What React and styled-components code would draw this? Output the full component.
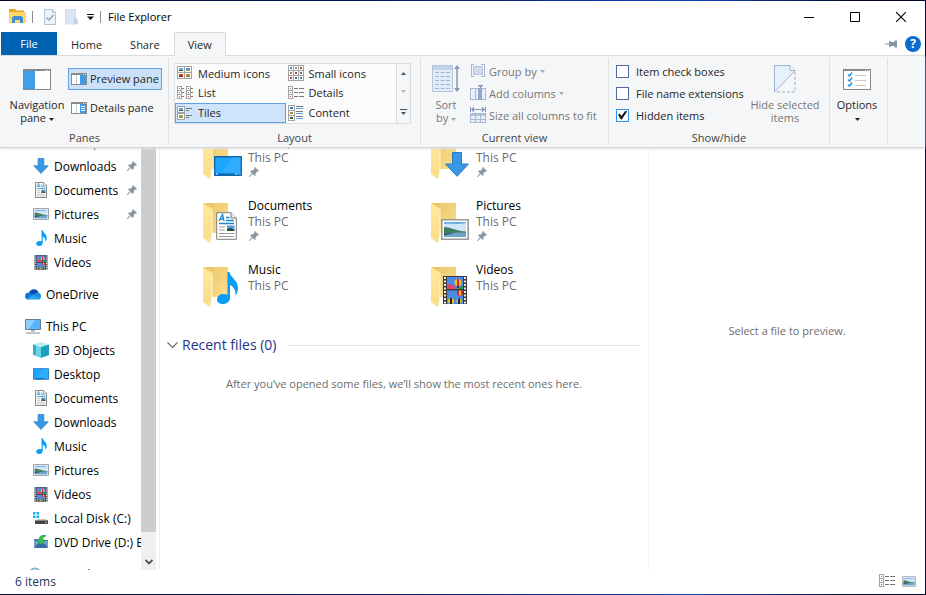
import React, { useState } from "react";
import styled, { createGlobalStyle } from "styled-components";

/* ---------- drawings ---------- */

const DocumentArt = (props) => (
  <svg viewBox="0 0 21 28" {...props}>
    <path d="M.7.7H15l5.3 5.3V27.3H.7Z" fill="#fff" stroke="#7d7d7d" vectorEffect="non-scaling-stroke" />
    <path d="M15 .7V6h5.3" fill="#eee" stroke="#7d7d7d" />
    <path d="M3 9 6.5 2.5 8 9M4 7h4" fill="none" stroke="#1e84d0" strokeWidth="1.3" />
    <path d="M10 5.5h3.500M10 8.500h8M3 11.500h15" stroke="#1e84d0" strokeWidth="1.3" />
    <path d="M3 15h6M3 18h6M3 21.500h15M3 24.500h15" stroke="#9a9a9a" />
    <path d="M11 13.500h7.500v5.500H11Z" fill="#5b9bd5" />
    <path d="M11 17l4-1 3.500 2v1H11Z" fill="#234b3c" />
  </svg>
);

const MusicArt = (props) => (
  <svg viewBox="0 0 21 32" {...props}>
    <path
      d="M10.500 0h2c.5 5 8.500 8 8.500 16 0 3-1 5.500-2.500 8 .5-5-1-8.500-5.500-11v12.500c0 4-3 6.500-7 6.500-3.500 0-6-1.700-6-4.500C0 24 3 22 6.500 22c1.500 0 3 .3 4 1Z"
      fill="#0a9bf5"
    />
  </svg>
);

const PictureArt = (props) => (
  <svg viewBox="0 0 28 21" {...props}>
    <path d="M.8.8h26.400v19.400H.8Z" fill="#fff" stroke="#999" strokeWidth="1.600" />
    <path d="M3 3h22v15H3Z" fill="#6aa8ea" />
    <path d="M3 5c7-1 13 1 22-1v9H3Z" fill="#cfe6fa" />
    <path d="M3 8c7 0 13 4.500 22 4.500V14H3Z" fill="#3f7d5c" />
    <path d="M3 13.500h22V18H3Z" fill="#6ea4c8" />
    <path d="M3 13.500h12L3 16.500Z" fill="#35625c" />
  </svg>
);

const FilmArt = (props) => (
  <svg viewBox="0 0 24 28" {...props}>
    <path d="M0 0h24v28H0Z" fill="#3a3a3a" />
    <path d="M4 1h16v12H4ZM4 14.500h16V28H4Z" fill="#4a8be4" />
    <path d="M4 9l4-1 4 2v3H4Z" fill="#d8486a" />
    <path d="M13 13l7-3v3Z" fill="#2c9a3f" />
    <circle cx="15" cy="6.500" r="3.500" fill="#f4c21f" />
    <path d="M14 3h2v7h-2Z" fill="#d8262c" />
    <path d="M14 10h2l-.5 2h-1Z" fill="#222" />
    <circle cx="17" cy="17" r="3" fill="#d8262c" />
    <path d="M16 14.500h2v5h-2Z" fill="#f4c21f" />
    <circle cx="8" cy="25" r="3" fill="#f4c21f" />
    <circle cx="16" cy="25" r="2.500" fill="#f4c21f" />
    <path d="M7 22h2v6H7ZM15 22.500h2V28h-2Z" fill="#222" />
    <path d="M2 1v27M22 1v27" stroke="#eee" strokeWidth="2" strokeDasharray="2 1.500" />
  </svg>
);

const ArrowArt = (props) => (
  <svg viewBox="0 0 24 25" {...props}>
    <path d="M7.500.5h9V12h7L12 24.300.5 12h7Z" fill="#3a97e4" stroke="#2a7cc4" />
  </svg>
);

const DesktopArt = (props) => (
  <svg viewBox="0 0 28 20" {...props}>
    <path d="M.7.7h26.600v18.600H.7Z" fill="#1ea5ff" stroke="#0c69b0" strokeWidth="1.400" />
    <path d="M18 1.400h8.500v15H8Z" fill="#43b5ff" opacity=".5" />
    <path d="M1.400 17.500h25.200v1.200H1.400Z" fill="#0c62a8" />
    <path d="M2 18h1.500M21 18h1.500M23.500 18h1M25.500 18h1" stroke="#fff" />
  </svg>
);

const CloudArt = (props) => (
  <svg viewBox="0 0 16 11" {...props}>
    <path d="M4 4C5 1 7 .3 9 .3c2.500 0 4 1.500 4.500 3.500L9 6Z" fill="#0a4fae" />
    <path d="M4 3.500C1.500 3.500 0 5 0 7.300 0 9 1 10.600 3.500 10.600L10 6Z" fill="#1374d6" />
    <path d="M13 3.800c2 .2 3 1.500 3 3.400 0 2-1.400 3.400-3.300 3.400L8 6.500c2-2 3-2.700 5-2.700Z" fill="#1490e0" />
    <path d="M2 10c2-1 4-4 7-4l6.500 3.200c-.6.900-1.600 1.400-3 1.400h-9C2.800 10.600 2.400 10.400 2 10Z" fill="#29a5f0" />
  </svg>
);

const ComputerArt = (props) => (
  <svg viewBox="0 0 16 15" {...props}>
    <path d="M.5.5h15v10H.5Z" fill="#55b6f8" stroke="#5f7f98" />
    <path d="M1 1h9L4 10H1Z" fill="#8fd0fb" />
    <path d="M6 11h4v1.500H6Z" fill="#9ab" />
    <path d="M1 14h14" stroke="#7b91a5" />
  </svg>
);

const CubeArt = (props) => (
  <svg viewBox="0 0 16 16" {...props}>
    <path d="M8 0l8 2.500L8 5 0 2.500Z" fill="#b9ecf2" />
    <path d="M0 2.500 8 5v11l-8-3Z" fill="#6ed3e0" />
    <path d="M16 2.500 8 5v11l8-3Z" fill="#1b9fc0" />
    <path d="M0 2.500 3 3.500v9l-3 .5Z" fill="#2aaec9" />
  </svg>
);

const DiskArt = (props) => (
  <svg viewBox="0 0 16 13" {...props}>
    <path d="M0 0h2.500v2.500H0ZM3.500 0H6v2.500H3.500ZM0 3.500h2.500V6H0ZM3.500 3.500H6V6H3.500Z" fill="#12b5ef" />
    <path d="M4 7h9l2 2H2Z" fill="#c5c5c5" />
    <path d="M2 8.500h13v3.500H2Z" fill="#444" />
    <path d="M12 10h2v1h-2Z" fill="#5fe05f" />
  </svg>
);

const DvdArt = (props) => (
  <svg viewBox="0 0 14 14" {...props}>
    <path d="M0 4h4l1 1h9v8H0Z" fill="#4d7fc0" />
    <path d="M0 6h14v7H0Z" fill="#6f9fd6" />
    <path d="M1 11c4-4 8-4 12 0v2H1Z" fill="#3b68a8" />
    <path d="M11 0c-4 0-6 2-6 5H3l4 5 4-5H8.500c0-2 .5-3 3.500-4Z" fill="#35c24a" stroke="#168a2c" strokeWidth=".6" />
  </svg>
);

const NetworkArt = (props) => (
  <svg viewBox="0 0 16 14" {...props}>
    <circle cx="10" cy="6" r="5.500" fill="#6fa8bf" />
    <path d="M7 3c2-2 4-2 6 0l-2 3Z" fill="#bcdbe8" />
    <path d="M2 7h11v6H2Z" fill="#3b97d3" />
  </svg>
);

const FolderArt = (props) => (
  <svg viewBox="0 0 40 44" {...props}>
    <defs>
      <linearGradient id="back" x1="0" y1="0" x2="1" y2="1">
        <stop offset="0" stopColor="#e9c466" />
        <stop offset="1" stopColor="#fbe08e" />
      </linearGradient>
      <linearGradient id="flap" x1="0" y1="0" x2="0" y2="1">
        <stop offset="0" stopColor="#ffe89f" />
        <stop offset="1" stopColor="#fbdd88" />
      </linearGradient>
    </defs>
    <path d="M0 1h25v29l-3 1H8Z" fill="url(#back)" />
    <path d="M0 1l9 6v24l-2 10-7-5Z" fill="url(#flap)" />
    <path d="M9 7v24l-1.500 10" fill="none" stroke="#fff4cc" />
  </svg>
);

const PinArt = (props) => (
  <svg viewBox="0 0 12 12" width="12" height="12" {...props}>
    <path
      d="M7 1l4 4-1 .8-.8-.2L7.500 7.500c.3 1.200 0 2-.6 2.600L4.700 8 1.500 11.200.8 10.700 4 7.300 1.900 5.200c.7-.7 1.600-.9 2.700-.6L6.500 2.800 6.200 2Z"
      fill="#8b969f"
    />
  </svg>
);

const WindowArt = ({ lines, ...props }) => (
  <svg viewBox="0 0 16 12" width="16" height="12" shapeRendering="crispEdges" {...props}>
    <path d="M0 0h16v12H0Z" fill="#8a8a8a" />
    <path d="M1 2h14v9H1Z" fill="#fff" />
    <path d="M12 1h1v1h-1ZM14 1h1v1h-1Z" fill="#ddd" />
    <path d="M5 2v9M9 2v9" stroke="#c4c8cc" />
    <path d="M9 2h6v9H9Z" fill="#3a9bea" />
    {lines && <path d="M10 4.500h4M10 6.500h4M10 8.500h4" stroke="#fff" />}
  </svg>
);

const NavigationArt = () => (
  <svg viewBox="0 0 28 21" width="28" height="21" shapeRendering="crispEdges">
    <path d="M0 0h28v21H0Z" fill="#858789" />
    <path d="M1 2h26v18H1Z" fill="#fff" />
    <path d="M1 2h11v18H1Z" fill="#3f9fe8" />
    <path d="M22 1h1v1h-1ZM24 1h1v1h-1ZM26 1h1v1h-1Z" fill="#eee" />
  </svg>
);

const Thumb = ({ x, y, top, bottom }) => (
  <>
    <path d={`M${x}.5 ${y}.5h7v6h-7Z`} fill="#fff" stroke="#a3a3a3" />
    <path d={`M${x + 2} ${y + 2}h4v2h-4Z`} fill={top} />
    <path d={`M${x + 2} ${y + 4}h4v1h-4Z`} fill={bottom} />
  </>
);

const MediumArt = () => (
  <svg viewBox="0 0 16 16" width="16" height="16" shapeRendering="crispEdges">
    <Thumb x={0} y={1} top="#6aa9e6" bottom="#2c6048" />
    <Thumb x={7} y={1} top="#4c8fdd" bottom="#a6b541" />
    <Thumb x={0} y={7} top="#d0402c" bottom="#8c1d15" />
    <Thumb x={7} y={7} top="#d98725" bottom="#5b8f39" />
  </svg>
);

const SmallArt = () => (
  <svg viewBox="0 0 16 16" width="16" height="16" shapeRendering="crispEdges">
    <path d="M0 0h16v16H0Z" fill="#a3a3a3" />
    {[0, 1, 2].map((row) =>
      [0, 1, 2].map((col) => (
        <g key={`${row}${col}`}>
          <path d={`M${1 + col * 5} ${1 + row * 5}h4v4h-4Z`} fill="#fff" />
          <path
            d={`M${2 + col * 5} ${2 + row * 5}h2v2h-2Z`}
            fill={["#4a86a8", "#a58a4a", "#b04a35", "#57748f"][(row + col) % 4]}
          />
        </g>
      ))
    )}
  </svg>
);

const dots = ["#4a9a6a", "#4a86c8", "#c8324a"];

const Strip = ({ x }) => (
  <>
    <path d={`M${x} 1h5v13h-5Z`} fill="#a3a3a3" />
    {dots.map((fill, i) => (
      <g key={fill}>
        <path d={`M${x + 1} ${2 + i * 4}h3v3h-3Z`} fill="#fff" />
        <path d={`M${x + 2} ${3 + i * 4}h1v1h-1Z`} fill={fill} />
      </g>
    ))}
  </>
);

const ListArt = () => (
  <svg viewBox="0 0 16 16" width="16" height="16" shapeRendering="crispEdges">
    <Strip x={0} />
    <Strip x={9} />
    <path d="M5 3.500h2M5 7.500h2M5 11.500h2M14 3.500h2M14 7.500h2M14 11.500h2" stroke="#777" />
  </svg>
);

const DetailsArt = () => (
  <svg viewBox="0 0 16 16" width="16" height="16" shapeRendering="crispEdges">
    <Strip x={0} />
    <path d="M6 3.500h4M11 3.500h5M6 7.500h4M11 7.500h5M6 11.500h4M11 11.500h5" stroke="#777" />
  </svg>
);

const TilesArt = () => (
  <svg viewBox="0 0 16 16" width="16" height="16" shapeRendering="crispEdges">
    <Thumb x={0} y={1} top="#6aa9e6" bottom="#2c6048" />
    <Thumb x={0} y={8} top="#8fae4a" bottom="#c7782e" />
    <path d="M9 3.500h6M9 5.500h3M9 10.500h6M9 12.500h3" stroke="#777" />
  </svg>
);

const ContentArt = () => (
  <svg viewBox="0 0 16 16" width="16" height="16" shapeRendering="crispEdges">
    <path d="M0 0h7v16H0Z" fill="#a3a3a3" />
    <path d="M1 1h5v4H1ZM1 6h5v4H1ZM1 11h5v4H1Z" fill="#fff" />
    <path d="M2 2h3v2H2Z" fill="#2f7f9a" />
    <path d="M2 7h3v2H2Z" fill="#a58a4a" />
    <path d="M2 12h3v2H2Z" fill="#2c6048" />
    <path d="M8 1.500h7M8 6.500h7M8 11.500h7" stroke="#777" />
    <path d="M8 3.500h7M8 8.500h7M8 13.500h7" stroke="#5aa5ee" />
  </svg>
);

const SortArt = () => (
  <svg viewBox="0 0 28 28" width="28" height="28">
    <path d="M.5.500h20v26H.5Z" fill="#e3ebf7" stroke="#b6c5de" />
    <path d="M1 1h19v4H1Z" fill="#c4d2e8" />
    <path d="M3 7.500h15M3 11.500h15M3 15.500h15M3 19.500h15M3 23.500h15" stroke="#a5b6d3" strokeDasharray="4 1.500" />
    <path d="M25 2v23" stroke="#8397bb" strokeWidth="1.500" />
    <path d="M22 4l3-4 3 4ZM22 23l3 4 3-4Z" fill="#8397bb" />
  </svg>
);

const GroupArt = () => (
  <svg viewBox="0 0 16 16" width="16" height="16" shapeRendering="crispEdges">
    <path d="M4 1.500H1.500v12H4M11 1.500h3.500v12H11" fill="none" stroke="#a9b6cc" />
    <path d="M3.500 3.500h9v8h-9Z" fill="#d0dcee" stroke="#b6c5de" />
  </svg>
);

const AddArt = () => (
  <svg viewBox="0 0 16 16" width="16" height="16" shapeRendering="crispEdges">
    <path d="M.5 3.500h15v11H.5Z" fill="#eaf0fa" stroke="#a9b9d5" />
    <path d="M5 3v12" stroke="#a9b9d5" />
    <path d="M8 3h4v12H8Z" fill="#93a7c9" />
    <path d="M8 0h5l-2.500 3Z" fill="#8397bb" />
  </svg>
);

const SizeArt = () => (
  <svg viewBox="0 0 16 16" width="16" height="16" shapeRendering="crispEdges">
    <path d="M.5 0v5M15.500 0v5M2 2.500h12M4 .5 2 2.500l2 2M12 .5l2 2-2 2" fill="none" stroke="#8397bb" />
    <path d="M.5 6.500h15v9H.5Z" fill="#eaf0fa" stroke="#a9b9d5" />
    <path d="M1 7h14v2H1Z" fill="#b6c5de" />
    <path d="M5.500 7v9M10.500 7v9M0 12.500h16" stroke="#a9b9d5" />
  </svg>
);

const HideArt = () => (
  <svg viewBox="0 0 22 28" width="22" height="28">
    <path d="M.5.500H16l5 5L.5 27Z" fill="#e8f0fb" stroke="#a0b2d4" />
    <path d="M16 .500v5h5" fill="#f6f9fd" stroke="#a0b2d4" />
    <path d="M21 7v20H2" fill="none" stroke="#a0aec6" strokeDasharray="3 2" />
  </svg>
);

const OptionsArt = () => (
  <svg viewBox="0 0 28 21" width="28" height="21">
    <g shapeRendering="crispEdges">
      <path d="M0 0h28v21H0Z" fill="#858789" />
      <path d="M1 2h26v18H1Z" fill="#fff" />
      <path d="M22 1h1v1h-1ZM24 1h1v1h-1ZM26 1h1v1h-1Z" fill="#eee" />
      <path d="M12 6.500h11M12 11.500h11M12 16.500h11" stroke="#c8c8c8" />
    </g>
    <path d="M5 6l1.500 1.500L9 4M5 11l1.500 1.500L9 9M5 16l1.500 1.500L9 14" fill="none" stroke="#2b94e3" strokeWidth="1.500" />
  </svg>
);

const Caret = ({ color = "#222" }) => (
  <svg viewBox="0 0 5 3" width="5" height="3">
    <path d="M0 0h5L2.500 3Z" fill={color} />
  </svg>
);

const art = {
  desktop: { Art: DesktopArt, w: 16, h: 12, box: [11, 18, 28, 20] },
  downloads: { Art: ArrowArt, w: 16, h: 16, box: [14, 14, 24, 25] },
  documents: { Art: DocumentArt, w: 12, h: 16, box: [13, 10, 21, 28] },
  pictures: { Art: PictureArt, w: 16, h: 12, box: [10, 17, 28, 21] },
  music: { Art: MusicArt, w: 11, h: 16, box: [14, 6, 21, 32] },
  videos: { Art: FilmArt, w: 14, h: 15, box: [12, 10, 24, 28] },
  onedrive: { Art: CloudArt, w: 16, h: 11 },
  computer: { Art: ComputerArt, w: 16, h: 15 },
  objects: { Art: CubeArt, w: 16, h: 16 },
  disk: { Art: DiskArt, w: 16, h: 13 },
  dvd: { Art: DvdArt, w: 14, h: 14 },
  network: { Art: NetworkArt, w: 16, h: 14 },
};

/* ---------- data ---------- */

const navGroups = [
  [
    { icon: "desktop", label: "Desktop", pinned: true },
    { icon: "downloads", label: "Downloads", pinned: true },
    { icon: "documents", label: "Documents", pinned: true },
    { icon: "pictures", label: "Pictures", pinned: true },
    { icon: "music", label: "Music" },
    { icon: "videos", label: "Videos" },
  ],
  [{ icon: "onedrive", label: "OneDrive", root: true }],
  [
    { icon: "computer", label: "This PC", root: true },
    { icon: "objects", label: "3D Objects" },
    { icon: "desktop", label: "Desktop" },
    { icon: "documents", label: "Documents" },
    { icon: "downloads", label: "Downloads" },
    { icon: "music", label: "Music" },
    { icon: "pictures", label: "Pictures" },
    { icon: "videos", label: "Videos" },
    { icon: "disk", label: "Local Disk (C:)" },
    { icon: "dvd", label: "DVD Drive (D:) ESD-ISO" },
  ],
  [{ icon: "network", label: "Network", root: true }],
];

const folders = [
  { icon: "desktop", label: "Desktop", pinned: true },
  { icon: "downloads", label: "Downloads", pinned: true },
  { icon: "documents", label: "Documents", pinned: true },
  { icon: "pictures", label: "Pictures", pinned: true },
  { icon: "music", label: "Music" },
  { icon: "videos", label: "Videos" },
];

const layouts = [
  ["Medium icons", MediumArt],
  ["Small icons", SmallArt],
  ["List", ListArt],
  ["Details", DetailsArt],
  ["Tiles", TilesArt],
  ["Content", ContentArt],
];

/* ---------- component ---------- */

export default function App() {
  const [layout, setLayout] = useState("Tiles");

  return (
    <>
      <GlobalStyle />
      <Backdrop>
        <Window>
          <TitleBar>
            <svg viewBox="0 0 17 15" width="17" height="15">
              <path d="M0 0h6l1 1.500h8V5H0Z" fill="#e9a820" />
              <path d="M0 3h17v11H0Z" fill="#ffd669" />
              <path d="M3 14V9.500C3 8 4 7 5.500 7h6C13 7 14 8 14 9.500V14h-3v-3H6v3Z" fill="#3c8fd6" />
            </svg>
            <TitleRule />
            <QuickButton aria-label="Properties">
              <svg viewBox="0 0 12 16" width="12" height="16">
                <path d="M.5.500h8l3 3v12H.5Z" fill="#eef3fa" stroke="#b5c3d9" />
                <path d="M8.500.500v3h3" fill="none" stroke="#b5c3d9" />
                <path d="M2.500 8.500l2.500 2.500 4.500-5" fill="none" stroke="#8fa5c8" strokeWidth="1.500" />
              </svg>
            </QuickButton>
            <QuickButton aria-label="New folder">
              <svg viewBox="0 0 13 16" width="13" height="16">
                <path d="M0 0h11v15H0Z" fill="#dbe5f3" />
                <path d="M9 9l3 1v5H9Z" fill="#c3d1e6" />
                <path d="M.5.500h10v9l2 1v4.500H.5Z" fill="none" stroke="#d0dcec" />
              </svg>
            </QuickButton>
            <QuickButton aria-label="Customize Quick Access Toolbar">
              <svg viewBox="0 0 7 6" width="7" height="6">
                <path d="M0 0h7v1H0ZM0 2.500h7L3.500 6Z" fill="#111" />
              </svg>
            </QuickButton>
            <TitleRule />
            <Title>File Explorer</Title>
            <CaptionButton aria-label="Minimize">
              <svg viewBox="0 0 10 10" width="10" height="10">
                <path d="M0 5.500h10" stroke="#000" />
              </svg>
            </CaptionButton>
            <CaptionButton aria-label="Maximize">
              <svg viewBox="0 0 10 10" width="10" height="10">
                <path d="M.5.500h9v9h-9Z" fill="none" stroke="#000" />
              </svg>
            </CaptionButton>
            <CaptionButton aria-label="Close">
              <svg viewBox="0 0 10 10" width="10" height="10">
                <path d="M0 0l10 10M10 0 0 10" stroke="#000" strokeWidth="1.100" />
              </svg>
            </CaptionButton>
          </TitleBar>

          <TabBar>
            <FileTab>File</FileTab>
            <Tab>Home</Tab>
            <Tab>Share</Tab>
            <Tab $active>View</Tab>
            <TabTools>
              <QuickButton aria-label="Pin the ribbon">
                <svg viewBox="0 0 12 8" width="12" height="8">
                  <path d="M0 3.500h4V1.500l1-1 1 1.500h3.500V.500H12v7H9.500V6H6L5 7.500l-1-1v-2H0Z" fill="#8b969f" />
                </svg>
              </QuickButton>
              <HelpButton aria-label="Help">?</HelpButton>
            </TabTools>
          </TabBar>

          <Ribbon>
            <Group $width={168}>
              <GroupBody $left={7}>
                <BigButton $width={58}>
                  <NavigationArt />
                  <span>
                    Navigation pane <Caret />
                  </span>
                </BigButton>
                <Stack $gap={7} $top={10} $left={2}>
                  <PaneButton $active>
                    <WindowArt />
                    Preview pane
                  </PaneButton>
                  <PaneButton>
                    <WindowArt lines />
                    Details pane
                  </PaneButton>
                </Stack>
              </GroupBody>
              <GroupLabel>Panes</GroupLabel>
            </Group>

            <Group $width={252}>
              <GroupBody $left={5} $right={9}>
                <Gallery>
                  <GalleryGrid>
                    {layouts.map(([name, Art]) => (
                      <GalleryItem key={name} $active={layout === name} onClick={() => setLayout(name)}>
                        <Art />
                        {name}
                      </GalleryItem>
                    ))}
                  </GalleryGrid>
                  <GalleryScroll>
                    <button aria-label="Previous row">
                      <svg viewBox="0 0 5 3" width="5" height="3">
                        <path d="M0 3h5L2.500 0Z" fill="#44546a" />
                      </svg>
                    </button>
                    <button aria-label="Next row">
                      <Caret color="#b0b5bc" />
                    </button>
                    <button aria-label="More layouts">
                      <svg viewBox="0 0 7 6" width="7" height="6">
                        <path d="M0 0h7v1H0ZM1 3h5L3.500 6Z" fill="#44546a" />
                      </svg>
                    </button>
                  </GalleryScroll>
                </Gallery>
              </GroupBody>
              <GroupLabel>Layout</GroupLabel>
            </Group>

            <Group $width={188}>
              <GroupBody $left={5}>
                <BigButton $width={40} disabled>
                  <SortArt />
                  <span>
                    Sort
                    <br />
                    by <Caret color="#a8a8a8" />
                  </span>
                </BigButton>
                <Stack $top={2} $left={4}>
                  <LineButton disabled>
                    <GroupArt />
                    Group by <Caret color="#a8a8a8" />
                  </LineButton>
                  <LineButton disabled>
                    <AddArt />
                    Add columns <Caret color="#a8a8a8" />
                  </LineButton>
                  <LineButton disabled>
                    <SizeArt />
                    Size all columns to fit
                  </LineButton>
                </Stack>
              </GroupBody>
              <GroupLabel>Current view</GroupLabel>
            </Group>

            <Group $width={221}>
              <GroupBody $left={7} $right={4}>
                <Stack $top={2}>
                  <CheckRow>
                    <input type="checkbox" />
                    Item check boxes
                  </CheckRow>
                  <CheckRow>
                    <input type="checkbox" />
                    File name extensions
                  </CheckRow>
                  <CheckRow>
                    <input type="checkbox" defaultChecked />
                    Hidden items
                  </CheckRow>
                </Stack>
                <BigButton $width={80} $push disabled>
                  <HideArt />
                  <span>Hide selected items</span>
                </BigButton>
              </GroupBody>
              <GroupLabel>Show/hide</GroupLabel>
            </Group>

            <Group $width={58}>
              <GroupBody $left={2}>
                <BigButton $width={50}>
                  <OptionsArt />
                  <span>
                    Options
                    <br />
                    <Caret />
                  </span>
                </BigButton>
              </GroupBody>
            </Group>
          </Ribbon>

          <Content>
            <Sidebar>
              <NavList>
                {navGroups.map((items) => (
                  <NavGroup key={items[0].label}>
                    {items.map(({ icon, label, pinned, root }) => {
                      const { Art, w, h } = art[icon];
                      return (
                        <li key={label}>
                          <NavLink href="#" $root={root}>
                            <IconSlot>
                              <Art width={w} height={h} />
                            </IconSlot>
                            <span>{label}</span>
                            {pinned && <PinArt />}
                          </NavLink>
                        </li>
                      );
                    })}
                  </NavGroup>
                ))}
              </NavList>
              <ScrollBar>
                <ScrollThumb />
                <button aria-label="Scroll down">
                  <svg viewBox="0 0 8 6" width="8" height="6">
                    <path d="M.5 1 4 4.500 7.500 1" fill="none" stroke="#505050" strokeWidth="1.800" />
                  </svg>
                </button>
              </ScrollBar>
            </Sidebar>

            <Main>
              <Tiles>
                {folders.map(({ icon, label, pinned }) => {
                  const { Art, box } = art[icon];
                  const [x, y, width, height] = box;
                  return (
                    <Tile key={label}>
                      <svg viewBox="0 0 40 44" width="40" height="44">
                        <FolderArt width={40} height={44} />
                        <Art x={x} y={y} width={width} height={height} />
                      </svg>
                      <TileText>
                        {label}
                        <small>This PC</small>
                        {pinned && <PinArt />}
                      </TileText>
                    </Tile>
                  );
                })}
              </Tiles>
              <SectionHead>
                <svg viewBox="0 0 11 7" width="11" height="7">
                  <path d="M.5.500l5 5 5-5" fill="none" stroke="#6d6d6d" strokeWidth="1.200" />
                </svg>
                <h2>Recent files (0)</h2>
              </SectionHead>
              <EmptyNote>After you’ve opened some files, we’ll show the most recent ones here.</EmptyNote>
            </Main>

            <Preview>Select a file to preview.</Preview>
          </Content>

          <StatusBar>
            <span>6 items</span>
            <StatusButton aria-label="Details view">
              <DetailsArt />
            </StatusButton>
            <StatusButton aria-label="Large thumbnails view">
              <PictureArt width={14} height={11} />
            </StatusButton>
          </StatusBar>
        </Window>
      </Backdrop>
    </>
  );
}

/* ---------- styles ---------- */

const GlobalStyle = createGlobalStyle`
  * {
    box-sizing: border-box;
  }
  body {
    margin: 0;
    font-family: "Open Sans", "Noto Sans", sans-serif;
    font-size: 12px;
    color: #000;
  }
  button {
    font: inherit;
    color: inherit;
    background: none;
    border: 0;
    padding: 0;
  }
  ul {
    list-style: none;
    margin: 0;
    padding: 0;
  }
  svg {
    flex: none;
    display: block;
  }
`;

const Backdrop = styled.div`
  height: 100vh;
  padding: 1px 1px 1px 0;
  background: linear-gradient(to right, #020a2c, #04145a 40%, #1140c0 75%, #020a2c 92%);
`;

const Window = styled.div`
  height: 100%;
  display: flex;
  flex-direction: column;
  background: #fff;
`;

const TitleBar = styled.header`
  display: flex;
  align-items: center;
  height: 31px;
  padding: 0 1px 0 9px;
  > svg {
    margin-right: 4px;
  }
`;

const TitleRule = styled.span`
  width: 1px;
  height: 12px;
  margin: 0 6px 0 2px;
  background: #8c8c8c;
`;

const QuickButton = styled.button`
  display: grid;
  place-items: center;
  margin: 0 4px 0 5px;
`;

const StatusButton = styled(QuickButton)`
  margin: 0 4px 0 3px;
`;

const Title = styled.span`
  flex: 1;
  padding-left: 1px;
  font-size: 11px;
`;

const CaptionButton = styled.button`
  display: grid;
  place-items: center;
  width: 46px;
  height: 31px;
`;

const TabBar = styled.div`
  display: flex;
  height: 23px;
  padding-left: 1px;
  font-size: 11px;
`;

const Tab = styled.button`
  padding: 0 13px;
  color: #262626;
  border: 1px solid ${({ $active }) => ($active ? "#dadbdc" : "transparent")};
  border-bottom: 0;
  background: ${({ $active }) => ($active ? "#f5f6f7" : "none")};
  margin-bottom: ${({ $active }) => ($active ? "-1px" : "0")};
  z-index: 2;
`;

const FileTab = styled(Tab)`
  width: 56px;
  color: #fff;
  border: 0;
  background: #0063b1;
`;

const TabTools = styled.div`
  display: flex;
  align-items: center;
  margin-left: auto;
  gap: 4px;
  padding-right: 4px;
`;

const HelpButton = styled.button`
  width: 16px;
  height: 16px;
  border-radius: 50%;
  background: #0a6ccb;
  color: #fff;
  font-size: 12px;
  font-weight: 700;
  line-height: 16px;
`;

const Ribbon = styled.div`
  display: flex;
  height: 93px;
  padding: 2px 0 3px 1px;
  background: #f5f6f7;
  border-top: 1px solid #dadbdc;
  border-bottom: 1px solid #d5d6d8;
  box-shadow: 0 1px 2px #e2e2e2;
  color: #262626;
  font-size: 11px;
  line-height: 13px;
  z-index: 1;
`;

const Group = styled.section`
  display: flex;
  flex-direction: column;
  width: ${({ $width }) => $width}px;
  border-right: 1px solid #e0e1e3;
`;

const GroupBody = styled.div`
  display: flex;
  flex: 1;
  padding: 0 ${({ $right = 0 }) => $right}px 0 ${({ $left }) => $left}px;
`;

const GroupLabel = styled.div`
  text-align: center;
  color: #444;
  line-height: 12px;
`;

const Stack = styled.div`
  display: flex;
  flex-direction: column;
  gap: ${({ $gap = 0 }) => $gap}px;
  padding-top: ${({ $top }) => $top}px;
  margin-left: ${({ $left = 0 }) => $left}px;
`;

const BigButton = styled.button`
  display: flex;
  flex-direction: column;
  align-items: center;
  width: ${({ $width }) => $width}px;
  margin-left: ${({ $push }) => ($push ? "auto" : 0)};
  color: ${({ disabled }) => (disabled ? "#777" : "inherit")};
  > svg {
    height: 28px;
    margin-top: 7px;
    margin-bottom: 5px;
  }
  span svg {
    display: inline-block;
    vertical-align: middle;
  }
`;

const PaneButton = styled.button`
  display: flex;
  align-items: center;
  gap: 3px;
  height: 22px;
  padding: 0 2px 1px;
  white-space: nowrap;
  border: 1px solid ${({ $active }) => ($active ? "#62a2e4" : "transparent")};
  background: ${({ $active }) => ($active ? "#cbe1f9" : "none")};
`;

const LineButton = styled.button`
  display: flex;
  align-items: center;
  gap: 3px;
  height: 22px;
  white-space: nowrap;
  color: #777;
`;

const CheckRow = styled.label`
  display: flex;
  align-items: center;
  gap: 7px;
  height: 22px;
  white-space: nowrap;
  input {
    appearance: none;
    display: grid;
    place-items: center;
    width: 13px;
    height: 13px;
    margin: 0;
    border: 1px solid #51689a;
    background: #fff;
  }
  input:checked {
    border-color: #2b94f0;
  }
  input:checked::before {
    content: "";
    width: 9px;
    height: 9px;
    background: #111;
    clip-path: polygon(0 45%, 20% 35%, 38% 62%, 85% 0, 100% 12%, 42% 100%, 32% 100%);
  }
`;

const Gallery = styled.div`
  display: flex;
  flex: 1;
  height: 61px;
  margin-top: 5px;
  border: 1px solid #dcdde0;
  background: #fbfbfc;
`;

const GalleryGrid = styled.div`
  display: grid;
  flex: 1;
  grid-template-columns: 1fr 1fr;
  grid-auto-rows: 1fr;
`;

const GalleryItem = styled.button`
  display: flex;
  align-items: center;
  gap: 5px;
  padding: 0 1px 1px;
  white-space: nowrap;
  border: 1px solid ${({ $active }) => ($active ? "#62a2e4" : "transparent")};
  background: ${({ $active }) => ($active ? "#cde4fc" : "none")};
`;

const GalleryScroll = styled.div`
  display: grid;
  width: 14px;
  border-left: 1px solid #dcdde0;
  background: #f5f6f7;
  button {
    display: grid;
    place-items: center;
  }
`;

const Content = styled.div`
  display: grid;
  flex: 1;
  min-height: 0;
  grid-template-columns: 160px minmax(0, 1fr) 277px;
`;

const Sidebar = styled.nav`
  display: flex;
  min-height: 0;
  padding-right: 3px;
  border-right: 1px solid #f0f0f0;
`;

/* scrolled part way down the tree */
const NavList = styled.div`
  flex: 1;
  min-width: 0;
  overflow: hidden;
  > :first-child {
    margin-top: -18px;
  }
`;

const NavGroup = styled.ul`
  margin-bottom: 8px;
`;

const NavLink = styled.a`
  display: flex;
  align-items: center;
  gap: 5px;
  height: 24px;
  padding-left: ${({ $root }) => ($root ? 25 : 33)}px;
  color: #000;
  text-decoration: none;
  white-space: nowrap;
  > svg {
    margin: 0 3px 0 auto;
  }
`;

const IconSlot = styled.span`
  display: grid;
  place-items: center;
  width: 16px;
  height: 16px;
  flex: none;
`;

const ScrollBar = styled.div`
  display: flex;
  flex-direction: column;
  width: 15px;
  background: #f0f0f0;
  button {
    display: grid;
    place-items: center;
    height: 17px;
    margin-top: auto;
  }
`;

const ScrollThumb = styled.div`
  height: 91%;
  background: #cdcdcd;
`;

const Main = styled.main`
  min-width: 0;
  overflow: hidden;
`;

const Tiles = styled.div`
  display: grid;
  grid-template-columns: repeat(auto-fill, 228px);
  grid-auto-rows: 64px;
  margin: -22px 0 0 31px;
`;

const Tile = styled.button`
  display: flex;
  gap: 5px;
  padding: 12px 0 0 12px;
  text-align: left;
`;

const TileText = styled.span`
  display: flex;
  flex-direction: column;
  line-height: 16px;
  margin-top: -4px;
  small {
    font-size: 12px;
    color: #6d6d6d;
  }
`;

const SectionHead = styled.div`
  display: flex;
  align-items: center;
  gap: 4px;
  margin-top: 16px;
  padding: 0 8px 0 7px;
  h2 {
    margin: 0;
    font-size: 14px;
    font-weight: 400;
    line-height: 22px;
    color: #1e3287;
  }
  &::after {
    content: "";
    flex: 1;
    height: 1px;
    margin-left: 6px;
    background: #e2e2e2;
  }
`;

const EmptyNote = styled.p`
  margin: 20px 0 0;
  text-align: center;
  font-size: 11px;
  line-height: 16px;
  color: #6d6d6d;
`;

const Preview = styled.aside`
  padding: 175px 16px 0;
  text-align: center;
  font-size: 11px;
  line-height: 16px;
  color: #6d6d6d;
  border-left: 1px solid #f3f3f3;
`;

const StatusBar = styled.footer`
  display: flex;
  align-items: center;
  height: 24px;
  padding: 0 5px 2px 15px;
  color: #1e395b;
  span {
    margin-right: auto;
  }
`;
